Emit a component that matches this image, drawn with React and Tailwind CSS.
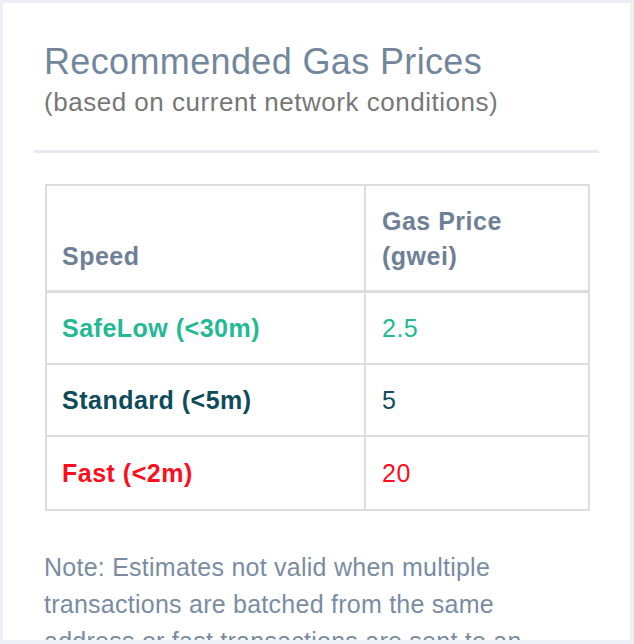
import React from 'react'

const rows = [
  { speed: 'SafeLow (<30m)', price: '2.5', color: 'text-[#23b994]' },
  { speed: 'Standard (<5m)', price: '5', color: 'text-[#0e4c5a]' },
  { speed: 'Fast (<2m)', price: '20', color: 'text-[#ff0d1c]' },
]

export default function App() {
  return (
    <div className="h-[644px] w-[634px] overflow-hidden bg-[#eceff3] pt-[3px] pl-[3px] pr-[4px] pb-[4px] font-['Liberation_Sans',Arial,sans-serif]">
      <div className="h-full overflow-hidden bg-white">
        <div className="px-[41px] pt-[39px]">
          <h1 className="text-[36px] leading-[40px] tracking-[0.01em] text-[#73879c]">Recommended Gas Prices</h1>
          <p className="mt-[5px] text-[26px] leading-[30px] tracking-[0.02em] text-[#777777]">(based on current network conditions)</p>
        </div>
        <div className="mx-[31px] mt-[33px] h-[3px] bg-[#e6e9ed]" />
        <div className="pt-[31px] pl-[42px] pr-[40px]">
          <div className="grid grid-cols-[319px_1fr] border-2 border-[#dddddd] text-[25px] leading-[35px] tracking-[0.02em]">
            <div className="flex items-end border-r-2 border-b-[3px] border-[#dddddd] px-[15px] pt-[18px] pb-[16px] font-bold text-[#6f8096]">Speed</div>
            <div className="border-b-[3px] border-[#dddddd] px-[16px] pt-[18px] pb-[16px] font-bold text-[#6f8096]">Gas Price<br />(gwei)</div>
            {rows.map((r, i) => (
              <React.Fragment key={r.speed}>
                <div className={`flex h-[72px] items-center border-r-2 border-[#dddddd] px-[15px] font-bold ${i < rows.length - 1 ? 'border-b-2' : ''} ${r.color}`}>{r.speed}</div>
                <div className={`flex h-[72px] items-center border-[#dddddd] px-[16px] ${i < rows.length - 1 ? 'border-b-2' : ''} ${r.color}`}>{r.price}</div>
              </React.Fragment>
            ))}
          </div>
        </div>
        <p className="mt-[38px] px-[41px] text-[25px] leading-[37px] tracking-[0.01em] text-[#7a8ca1]">
          Note: Estimates not valid when multiple transactions are batched from the same address or fast transactions are sent to an address with a high gas limit.
        </p>
      </div>
    </div>
  )
}
